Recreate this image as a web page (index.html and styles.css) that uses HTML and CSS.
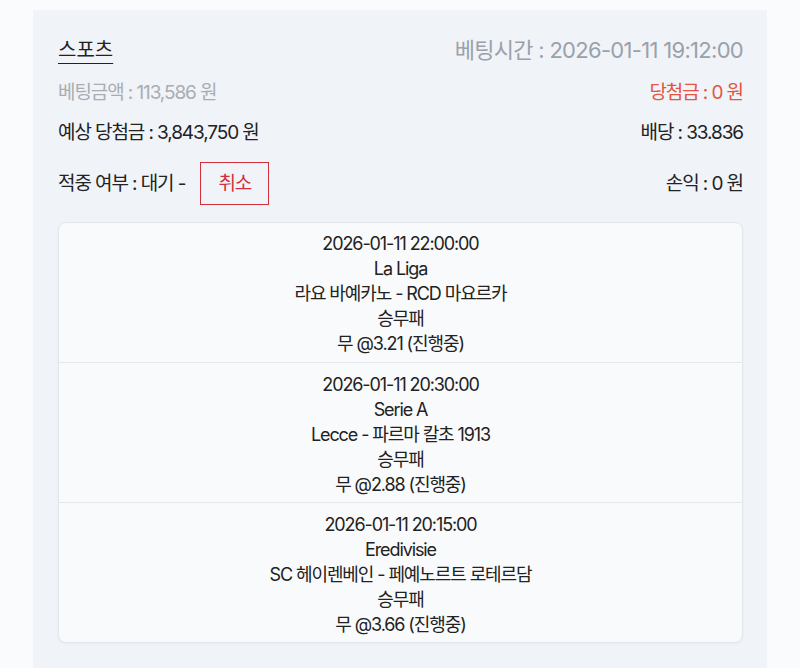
FILE: index.html
```html
<!DOCTYPE html>
<html lang="ko">
<head>
    <meta charset="UTF-8">
    <meta name="viewport" content="width=device-width, initial-scale=1.0">
    <title>베팅 내역</title>
    <link rel="stylesheet" href="styles.css">
</head>
<body>
    <div class="bet-card">
        <div class="bet-header">
            <span class="bet-type">스포츠</span>
            <span class="bet-time">베팅시간 : 2026-01-11 19:12:00</span>
        </div>

        <div class="bet-row first-row">
            <span class="muted">베팅금액 : 113,586 원</span>
            <span class="win">당첨금 : 0 원</span>
        </div>
        <div class="bet-row">
            <span>예상 당첨금 : 3,843,750 원</span>
            <span>배당 : 33.836</span>
        </div>
        <div class="bet-row result-row">
            <div class="result">
                <span>적중 여부 : 대기 -</span>
                <button class="cancel-btn">취소</button>
            </div>
            <span>손익 : 0 원</span>
        </div>

        <div class="games">
            <div class="game">
                <p>2026-01-11 22:00:00</p>
                <p>La Liga</p>
                <p>라요 바예카노 - RCD 마요르카</p>
                <p>승무패</p>
                <p>무 @3.21 (진행중)</p>
            </div>
            <div class="game">
                <p>2026-01-11 20:30:00</p>
                <p>Serie A</p>
                <p>Lecce - 파르마 칼초 1913</p>
                <p>승무패</p>
                <p>무 @2.88 (진행중)</p>
            </div>
            <div class="game">
                <p>2026-01-11 20:15:00</p>
                <p>Eredivisie</p>
                <p>SC 헤이렌베인 - 페예노르트 로테르담</p>
                <p>승무패</p>
                <p>무 @3.66 (진행중)</p>
            </div>
        </div>
    </div>
</body>
</html>
```

FILE: styles.css
```css
body {
    font-family: Inter, "Noto Sans CJK KR", sans-serif;
    margin: 0;
    background-color: #fafbfc;
    color: #222;
    font-size: 19px;
    letter-spacing: -1.1px;
}
.bet-card {
    width: 734px;
    margin: 10px 0 0 33px;
    padding: 24px 24px 40px 25px;
    box-sizing: border-box;
    background-color: #f0f3f8;
}
.bet-header {
    display: flex;
    justify-content: space-between;
    align-items: center;
    height: 28px;
}
.bet-type {
    font-size: 20px;
    letter-spacing: 0;
    text-decoration: underline;
    text-underline-offset: 6px;
    text-decoration-thickness: 1px;
}
.bet-time {
    font-size: 22px;
    letter-spacing: -0.7px;
    color: #9aa1ab;
}
.bet-row {
    display: flex;
    justify-content: space-between;
    align-items: center;
    line-height: 26px;
    margin-top: 14px;
}
.first-row {
    margin-top: 18px;
}
.muted {
    color: #a9adb3;
}
.win {
    color: #e4553e;
}
.result-row {
    margin-top: 16px;
}
.result {
    display: flex;
    align-items: center;
    gap: 15px;
}
.cancel-btn {
    font: inherit;
    letter-spacing: inherit;
    width: 69px;
    height: 43px;
    background: transparent;
    color: #d32f3a;
    border: 1.5px solid #d32f3a;
    border-radius: 0;
    padding: 0;
    cursor: pointer;
}
.games {
    margin-top: 17px;
    background-color: #f9fafb;
    border: 1px solid #e3e6ea;
    border-radius: 8px;
    box-shadow: 0 1px 3px rgba(0, 0, 0, 0.04);
    text-align: center;
    font-size: 18px;
    letter-spacing: -1.1px;
}
.game {
    padding: 9px 0 5px;
    border-top: 1px solid #e5e7eb;
}
.game:first-child {
    border-top: none;
    padding: 8px 0 6px;
}
.game p {
    margin: 0;
    line-height: 25px;
}
```
